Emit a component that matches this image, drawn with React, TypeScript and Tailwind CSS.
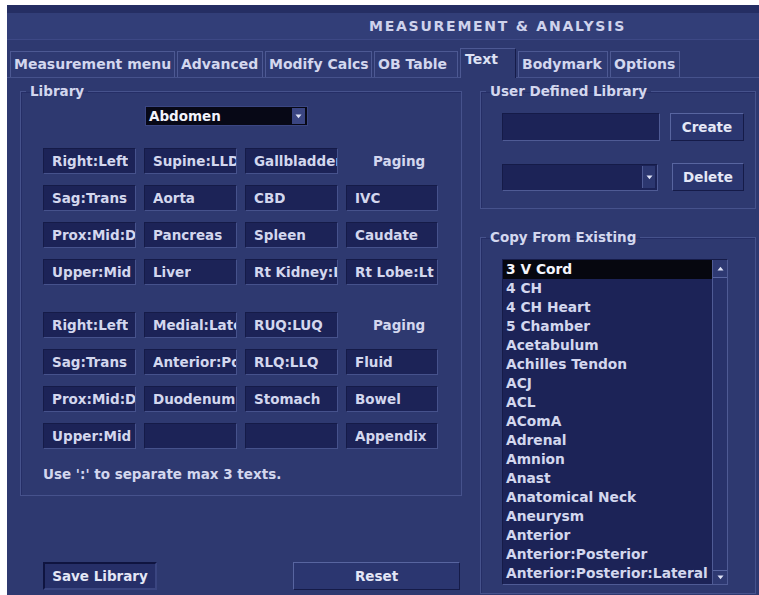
import React from 'react';

const TABS: [string, number][] = [
  ['Measurement menu', 165],
  ['Advanced', 86],
  ['Modify Calcs', 107],
  ['OB Table', 84],
  ['Text', 56],
  ['Bodymark', 90],
  ['Options', 70],
];

const PAGE_ONE = [
  ['Right:Left', 'Supine:LLD', 'Gallbladder', ''],
  ['Sag:Trans', 'Aorta', 'CBD', 'IVC'],
  ['Prox:Mid:Dist', 'Pancreas', 'Spleen', 'Caudate'],
  ['Upper:Mid', 'Liver', 'Rt Kidney:Lt', 'Rt Lobe:Lt'],
];

const PAGE_TWO = [
  ['Right:Left', 'Medial:Lateral', 'RUQ:LUQ', ''],
  ['Sag:Trans', 'Anterior:Posterior', 'RLQ:LLQ', 'Fluid'],
  ['Prox:Mid:Dist', 'Duodenum', 'Stomach', 'Bowel'],
  ['Upper:Mid', '', '', 'Appendix'],
];

const EXISTING = [
  '3 V Cord', '4 CH', '4 CH Heart', '5 Chamber', 'Acetabulum', 'Achilles Tendon', 'ACJ', 'ACL',
  'AComA', 'Adrenal', 'Amnion', 'Anast', 'Anatomical Neck', 'Aneurysm', 'Anterior',
  'Anterior:Posterior', 'Anterior:Posterior:Lateral',
];

function Arrow({ up = false }: { up?: boolean }) {
  return (
    <svg width="7" height="5" viewBox="0 0 7 5" className="text-[#dfe3f6]">
      {up ? <path d="M0.5 4.5 L3.5 0.8 L6.5 4.5 Z" fill="currentColor" /> : <path d="M0.5 0.5 L3.5 4.2 L6.5 0.5 Z" fill="currentColor" />}
    </svg>
  );
}

function Cell({ text }: { text: string }) {
  return (
    <div className="h-[26px] min-w-0 bg-[#1c2357] border border-[#151b48] border-r-[#46528c] border-b-[#46528c] pl-[8px] flex items-center overflow-hidden whitespace-nowrap text-[13.5px] text-[#d3d7ee]">
      <span className="block overflow-hidden">{text}</span>
    </div>
  );
}

function TextPage({ rows }: { rows: string[][] }) {
  return (
    <div className="grid grid-cols-[93px_93px_93px_92px] gap-x-[8px] gap-y-[11px]">
      {rows.map((row, r) =>
        row.map((t, c) =>
          r === 0 && c === 3 ? (
            <div key={`${r}-${c}`} className="h-[26px] flex items-center pl-[27px] text-[13.5px] text-[#d3d7ee]">Paging</div>
          ) : (
            <Cell key={`${r}-${c}`} text={t} />
          ),
        ),
      )}
    </div>
  );
}

function Group({ label, className, children }: { label: string; className?: string; children: React.ReactNode }) {
  return (
    <fieldset className={`border border-[#46528c] shadow-[inset_1px_1px_0_#252e66] ${className ?? ''}`}>
      <legend className="ml-[5px] px-[4px] text-[13.5px] text-[#d3d7ee]">{label}</legend>
      {children}
    </fieldset>
  );
}

export default function App() {
  return (
    <div className="w-[759px] h-[595px] bg-white pl-[7px] pt-[5px] overflow-hidden font-['DejaVu_Sans',sans-serif] font-bold">
      <div className="h-full bg-[#2e3970] flex flex-col">
        <div className="h-[8px] bg-[#252e63]" />
        <div className="h-[27px] bg-[#323e78] border-b border-[#3d4885] flex items-center pl-[362px] text-[14px] tracking-[1.75px] text-[#cfd3ec]">
          MEASUREMENT &amp; ANALYSIS
        </div>

        {/* tab strip */}
        <div className="h-[38px] flex items-end pl-[3px] border-b border-[#46528c]">
          {TABS.map(([t, w]) =>
            t === 'Text' ? (
              <div key={t} style={{ width: w }} className="h-[30px] mr-[2px] bg-[#2e3970] border-t border-l border-[#4d5993] border-r border-r-[#161c4a] -mb-px px-[4px] pt-px leading-[18px] text-[14px] text-[#dde1f4]">
                {t}
              </div>
            ) : (
              <div key={t} style={{ width: w }} className="h-[26px] mr-[2px] bg-[#2f3a72] border border-b-0 border-[#4d5993] px-[3px] flex items-center whitespace-nowrap text-[14px] text-[#d3d7ee]">
                {t}
              </div>
            ),
          )}
        </div>

        <div className="flex-1 flex">
          {/* left column */}
          <div className="ml-[13px] w-[442px] flex flex-col">
            <Group label="Library" className="mt-[3px] h-[415px]">
              <div className="pl-[22px]">
                <div className="ml-[102px] mt-[5px] w-[163px] h-[20px] bg-[#070816] border border-[#3b4682] flex items-center">
                  <span className="flex-1 pl-[3px] text-[13.5px] text-[#f2f3fa]">Abdomen</span>
                  <span className="w-[13px] h-[16px] mr-[2px] bg-[#3a4582] flex items-center justify-center">
                    <Arrow />
                  </span>
                </div>
                <div className="mt-[22px]">
                  <TextPage rows={PAGE_ONE} />
                </div>
                <div className="mt-[27px]">
                  <TextPage rows={PAGE_TWO} />
                </div>
                <div className="mt-[15px] text-[13.5px] text-[#d3d7ee]">Use ':' to separate max 3 texts.</div>
              </div>
            </Group>
            <div className="mt-[66px] flex pl-[23px]">
              <div className="w-[114px] h-[28px] bg-[#262f68] border-2 border-[#0f1440] border-r-[#3a4580] border-b-[#3a4580] flex items-center justify-center text-[13.5px] text-[#e4e7f6]">
                Save Library
              </div>
              <div className="ml-[136px] w-[167px] h-[28px] bg-[#2b3670] border border-[#5865a0] border-r-[#151b48] border-b-[#151b48] flex items-center justify-center text-[13.5px] text-[#e4e7f6]">
                Reset
              </div>
            </div>
          </div>

          {/* right column */}
          <div className="ml-[18px] w-[276px] flex flex-col">
            <Group label="User Defined Library" className="mt-[3px] h-[128px]">
              <div className="pl-[21px]">
                <div className="mt-[12px] flex items-center">
                  <div className="w-[158px] h-[28px] bg-[#1c2357] border border-[#151b48] border-r-[#4f5b95] border-b-[#4f5b95]" />
                  <div className="ml-[10px] w-[74px] h-[28px] bg-[#2b3670] border border-[#5865a0] border-r-[#151b48] border-b-[#151b48] flex items-center justify-center text-[13.5px] text-[#e4e7f6]">
                    Create
                  </div>
                </div>
                <div className="mt-[22px] flex items-center">
                  <div className="w-[156px] h-[27px] bg-[#1c2357] border border-[#151b48] border-r-[#4f5b95] border-b-[#4f5b95] flex justify-end items-center pr-[2px]">
                    <span className="w-[13px] h-[22px] bg-[#2c3770] border-l border-[#4f5b95] flex items-center justify-center">
                      <Arrow />
                    </span>
                  </div>
                  <div className="ml-[14px] w-[72px] h-[28px] bg-[#2b3670] border border-[#5865a0] border-r-[#151b48] border-b-[#151b48] flex items-center justify-center text-[13.5px] text-[#e4e7f6]">
                    Delete
                  </div>
                </div>
              </div>
            </Group>
            <Group label="Copy From Existing" className="mt-[18px] flex-1 mb-[1px]">
              <div className="pl-[21px]">
                <div className="mt-[12px] w-[226px] h-[326px] bg-[#1c2357] border border-[#151b48] border-r-[#4f5b95] border-b-[#4f5b95] flex">
                  <div className="flex-1 min-w-0 flex flex-col">
                    {EXISTING.map((name, i) => (
                      <div
                        key={name}
                        className={`h-[19px] pl-[3px] flex items-center whitespace-nowrap overflow-hidden text-[13.8px] ${
                          i === 0 ? 'bg-[#06070f] text-[#f4f5fb]' : 'text-[#d3d7ee]'
                        }`}
                      >
                        {name}
                      </div>
                    ))}
                  </div>
                  <div className="w-[15px] border-l border-[#4f5b95] bg-[#28326a] flex flex-col justify-between">
                    <div className="h-[18px] bg-[#2e3972] border-b border-[#5865a0] flex items-center justify-center">
                      <Arrow up />
                    </div>
                    <div className="h-[14px] bg-[#2e3972] border-t border-[#5865a0] flex items-center justify-center">
                      <Arrow />
                    </div>
                  </div>
                </div>
              </div>
            </Group>
          </div>
        </div>
      </div>
    </div>
  );
}
